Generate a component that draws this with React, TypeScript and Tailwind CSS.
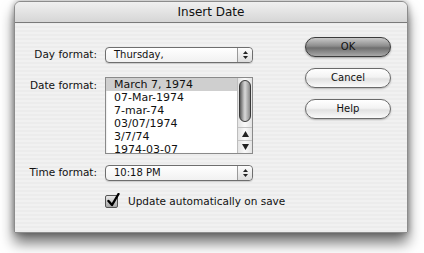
import React from "react";

const dates = ["March 7, 1974", "07-Mar-1974", "7-mar-74", "03/07/1974", "3/7/74", "1974-03-07"];

function Stepper() {
  return (
    <div className="w-[15px] h-full flex flex-col items-center justify-center gap-[2px] border-l border-[#9a9a9a] bg-[linear-gradient(#fdfdfd,#dcdcdc)] rounded-r-[4px]">
      <svg width="5" height="3" viewBox="0 0 5 3">
        <path d="M2.5 0 L5 3 L0 3 Z" fill="#222" />
      </svg>
      <svg width="5" height="3" viewBox="0 0 5 3">
        <path d="M0 0 L5 0 L2.5 3 Z" fill="#222" />
      </svg>
    </div>
  );
}

function Popup({ value }: { value: string }) {
  return (
    <div className="w-[148px] h-[16px] flex items-stretch rounded-[4px] border border-[#6e6e6e] bg-[linear-gradient(#ffffff,#f1f1f1)] shadow-[0_1px_1px_rgba(0,0,0,0.15)]">
      <div className="flex-1 pl-[8px] leading-[14px] text-[10px] text-[#111]">{value}</div>
      <Stepper />
    </div>
  );
}

function AquaButton({ label, primary }: { label: string; primary?: boolean }) {
  return (
    <button
      className={
        primary
          ? "w-[86px] h-[20px] rounded-full border border-[#3c3c3c] bg-[linear-gradient(#c9c9c9,#8c8c8c_45%,#6e6e6e_55%,#a8a8a8)] text-[10px] text-[#111] leading-[18px] shadow-[0_1px_2px_rgba(0,0,0,0.35)]"
          : "w-[86px] h-[20px] rounded-full border border-[#6a6a6a] bg-[linear-gradient(#ffffff,#f3f3f3_45%,#e2e2e2_55%,#fbfbfb)] text-[10px] text-[#111] leading-[18px] shadow-[0_1px_2px_rgba(0,0,0,0.25)]"
      }
    >
      {label}
    </button>
  );
}

export default function App() {
  return (
    <div
      className="w-[424px] h-[253px] bg-white overflow-hidden text-[10.5px]"
      style={{ fontFamily: '"DejaVu Sans", "Liberation Sans", sans-serif' }}
    >
      <div className="pl-[14px] pt-[1px]">
        <div className="w-[394px] h-[232px] flex flex-col rounded-t-[6px] border border-[#8c8c8c] bg-[repeating-linear-gradient(0deg,#ececec_0px,#ececec_2px,#f1f1f1_2px,#f1f1f1_4px)] shadow-[0_10px_14px_rgba(0,0,0,0.55),0_0_6px_rgba(0,0,0,0.35)]">
          {/* title bar */}
          <div className="h-[21px] shrink-0 rounded-t-[6px] border-b border-[#7a7a7a] bg-[linear-gradient(#f0f0f0,#d6d6d6)] flex items-center justify-center text-[12px] text-[#111]">
            Insert Date
          </div>

          {/* body */}
          <div className="flex-1 flex">
            <div className="w-[238px] shrink-0 pt-[24px] flex flex-col">
              <div className="flex items-center gap-[8px]">
                <div className="w-[82px] text-right text-[#111] whitespace-nowrap">Day format:</div>
                <Popup value="Thursday," />
              </div>

              <div className="flex items-start gap-[8px] mt-[14px]">
                <div className="w-[82px] text-right text-[#111] pt-[1px] whitespace-nowrap">Date format:</div>
                <div className="w-[148px] h-[77px] flex border border-[#8a8a8a] bg-white shadow-[inset_0_1px_2px_rgba(0,0,0,0.2)]">
                  <div className="flex-1 flex flex-col text-[11px] leading-[13px] text-[#111]">
                    {dates.map((d, i) => (
                      <div key={d} className={i === 0 ? "pl-[8px] h-[13px] bg-[#cfcfcf]" : "pl-[8px] h-[13px]"}>
                        {d}
                      </div>
                    ))}
                  </div>
                  <div className="w-[15px] flex flex-col border-l border-[#bdbdbd] bg-[linear-gradient(90deg,#e4e4e4,#fafafa,#e4e4e4)]">
                    <div className="h-[46px] pt-[2px] flex justify-center">
                      <div className="w-[12px] h-[42px] rounded-full border border-[#3a3a3a] bg-[linear-gradient(90deg,#5a5a5a,#b8b8b8_35%,#d8d8d8_50%,#8a8a8a)]" />
                    </div>
                    <div className="flex-1" />
                    <div className="h-[13px] flex items-center justify-center border-t border-[#c4c4c4]">
                      <svg width="7" height="6" viewBox="0 0 7 6">
                        <path d="M3.5 0 L7 6 L0 6 Z" fill="#222" />
                      </svg>
                    </div>
                    <div className="h-[13px] flex items-center justify-center border-t border-[#c4c4c4]">
                      <svg width="7" height="6" viewBox="0 0 7 6">
                        <path d="M0 0 L7 0 L3.5 6 Z" fill="#222" />
                      </svg>
                    </div>
                  </div>
                </div>
              </div>

              <div className="flex items-center gap-[8px] mt-[11px]">
                <div className="w-[82px] text-right text-[#111] whitespace-nowrap">Time format:</div>
                <Popup value="10:18 PM" />
              </div>

              <div className="flex items-center gap-[10px] mt-[13px] pl-[90px] whitespace-nowrap">
                <div className="relative shrink-0 w-[13px] h-[13px] rounded-[2px] border border-[#555] bg-[linear-gradient(#e8e8e8,#a8a8a8)]">
                  <svg className="absolute left-[1px] top-[-3px]" width="13" height="14" viewBox="0 0 13 14">
                    <path d="M1.5 8 L5 12 L11.5 1" stroke="#000" strokeWidth="2.4" fill="none" strokeLinecap="round" strokeLinejoin="round" />
                  </svg>
                </div>
                <span className="text-[#111]">Update automatically on save</span>
              </div>
            </div>

            <div className="ml-[52px] pt-[14px] flex flex-col gap-[11px]">
              <AquaButton label="OK" primary />
              <AquaButton label="Cancel" />
              <AquaButton label="Help" />
            </div>
          </div>
        </div>
      </div>
    </div>
  );
}
